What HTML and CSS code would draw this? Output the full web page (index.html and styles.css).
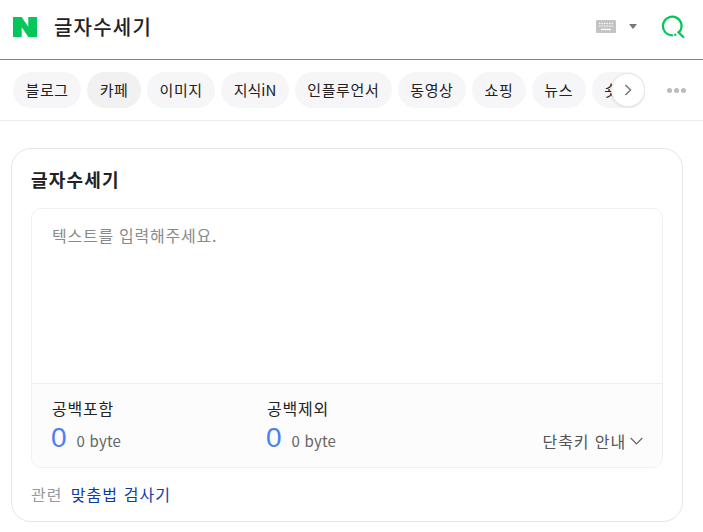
FILE: index.html
```html
<!DOCTYPE html>
<html lang="ko">
<head>
<meta charset="utf-8">
<title>글자수세기</title>
<link rel="stylesheet" href="styles.css">
</head>
<body>
<header class="top">
  <svg class="logo" width="24" height="20" viewBox="0 0 24 20"><path fill="#03c75a" d="M0 0h8.600l6.700 9.700V0H24v20h-8.600L8.700 10.300V20H0z"/></svg>
  <h1 class="query">글자수세기</h1>
  <div class="tools">
    <svg class="kbd" width="20" height="13" viewBox="0 0 20 13"><rect width="20" height="13" rx="1" fill="#c4c4c4"/><path stroke="#fff" stroke-width="1" stroke-dasharray="1.400 1.100" d="M3 3.500h14M3 6h14"/><path stroke="#fff" stroke-width="1.200" d="M5 9.500h10"/></svg>
    <span class="caret"></span>
    <svg class="search" width="24" height="24" viewBox="0 0 24 24" fill="none" stroke="#03c75a" stroke-width="2.300"><path stroke-linecap="round" d="M11.200 20.300A9.300 9.300 0 1 1 18 17.400M17.300 17.200l5 4.800"/><circle cx="14.300" cy="19.800" r=".5" fill="#03c75a" stroke-width="1.400"/></svg>
  </div>
</header>
<nav class="tabs">
  <div class="rail">
    <a class="chip">블로그</a>
    <a class="chip chip-on">카페</a>
    <a class="chip">이미지</a>
    <a class="chip chip-mixed">지식iN</a>
    <a class="chip">인플루언서</a>
    <a class="chip">동영상</a>
    <a class="chip">쇼핑</a>
    <a class="chip">뉴스</a>
    <a class="chip">숏폼</a>
    <button class="next" type="button" aria-label="다음"><svg width="8" height="12" viewBox="0 0 8 12" fill="none" stroke="#777" stroke-width="1.500"><path d="M1.500 1l5 5-5 5"/></svg></button>
  </div>
  <div class="more"><i></i><i></i><i></i></div>
</nav>
<main class="card">
  <h2 class="card-title">글자수세기</h2>
  <section class="box">
    <div class="input">텍스트를 입력해주세요.</div>
    <div class="stats">
      <div class="stat">
        <div class="stat-label">공백포함</div>
        <div class="stat-value"><strong class="num">0</strong><span class="bytes">0 byte</span></div>
      </div>
      <div class="stat">
        <div class="stat-label">공백제외</div>
        <div class="stat-value"><strong class="num">0</strong><span class="bytes">0 byte</span></div>
      </div>
      <a class="guide">단축키 안내<svg width="13" height="8" viewBox="0 0 13 8" fill="none" stroke="#666" stroke-width="1.200"><path d="M.7 1l5.800 5.800L12.300 1"/></svg></a>
    </div>
  </section>
  <p class="related"><span class="related-key">관련</span><a class="related-link">맞춤법 검사기</a></p>
</main>
</body>
</html>
```
FILE: styles.css
```css
* { box-sizing: border-box; }
html, body { margin: 0; padding: 0; }
body {
  width: 703px;
  height: 532px;
  overflow: hidden;
  background: #fff;
  color: #222;
  font-family: "Noto Sans CJK KR", "Noto Sans", sans-serif;
}
.top {
  height: 60px;
  display: flex;
  align-items: center;
  padding: 0 18px 0 13px;
  border-bottom: 1px solid #2db55d;
}
.logo { flex: none; margin-right: 17px; margin-top: -6px; }
.query {
  margin: -6px 0 0;
  font-size: 20px;
  font-weight: 500;
  letter-spacing: 1.2px;
  line-height: 28px;
  color: #222;
}
.tools { margin-left: auto; display: flex; align-items: center; margin-top: -6px; }
.kbd { margin-right: 13px; }
.caret {
  width: 0; height: 0;
  border: 4.5px solid transparent;
  border-top: 5px solid #777;
  border-bottom: 0;
  margin-right: 24px;
}
.tabs {
  height: 61px;
  display: flex;
  align-items: center;
  border-bottom: 1px solid #ebebeb;
  padding-left: 13px;
}
.rail {
  position: relative;
  width: 632px;
  display: flex;
  gap: 6px;
  overflow: hidden;
}
.chip {
  flex: none;
  height: 36px;
  padding: 0 12.5px;
  border-radius: 18px;
  background: #f6f6f8;
  font-size: 15px;
  letter-spacing: .6px;
  line-height: 35px;
  color: #222;
}
.chip-on { background: #f1f1f2; }
.chip-mixed { letter-spacing: 0; }
.next {
  position: absolute;
  right: 0;
  top: 1px;
  width: 34px;
  height: 34px;
  padding: 0;
  border: 1px solid #e8e8e8;
  border-radius: 50%;
  background: #fff;
  box-shadow: 0 1px 3px rgba(0,0,0,.1);
  display: flex;
  align-items: center;
  justify-content: center;
}
.more { display: flex; gap: 2px; margin-left: 22px; }
.more i { width: 5px; height: 5px; border-radius: 50%; background: #bbb; }
.card {
  margin: 27px 20px 0 11px;
  height: 374px;
  border: 1px solid #e6e6e6;
  border-radius: 20px;
  padding: 0 19px;
}
.card-title {
  margin: 0;
  height: 59px;
  padding-top: 15px;
  font-size: 18px;
  font-weight: 700;
  line-height: 30px;
  letter-spacing: 1.2px;
  color: #222;
}
.box {
  height: 260px;
  border: 1px solid #f0f0f0;
  border-radius: 10px;
  display: flex;
  flex-direction: column;
  overflow: hidden;
}
.input {
  flex: 1;
  padding: 14px 20px;
  font-size: 16px;
  line-height: 24px;
  letter-spacing: .75px;
  color: #8a8a8a;
}
.stats {
  height: 84px;
  background: #fcfcfc;
  border-top: 1px solid #ededed;
  padding: 12px 19px 0;
  display: flex;
  position: relative;
}
.stat { width: 215px; }
.stat-label { font-size: 16px; line-height: 24px; letter-spacing: .75px; color: #222; padding-left: 1px; }
.stat-value { display: flex; align-items: baseline; line-height: 30px; margin-top: 3px; }
.num { font-size: 28px; font-weight: 400; color: #4e7ff1; font-family: "Liberation Sans", sans-serif; }
.bytes { margin-left: 10px; font-size: 15px; color: #666; letter-spacing: .2px; }
.guide {
  margin-left: auto;
  align-self: flex-end;
  margin-bottom: 15px;
  display: flex;
  align-items: center;
  gap: 4px;
  font-size: 16px;
  line-height: 22px;
  letter-spacing: .9px;
  color: #555;
}
.related {
  margin: 14px 0 0;
  font-size: 16px;
  line-height: 24px;
  letter-spacing: 1.1px;
}
.related-key { color: #999; margin-right: 8px; }
.related-link { color: #0f3ca8; }
```
